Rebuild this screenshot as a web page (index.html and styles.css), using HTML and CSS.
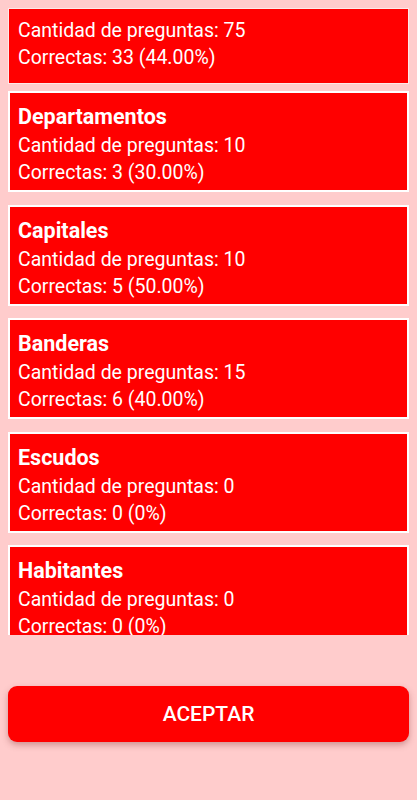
FILE: index.html
```html
<!DOCTYPE html>
<html>
    <head>
        <link rel="stylesheet" href="styles.css">
        <title>Resultados</title>
        <meta charset="utf-8">
        <meta name="viewport" content="width=device-width, initial-scale=1">
    </head>
    <body>
        <div class="screen">
            <div class="scroll">
                <div class="total">
                    <div class="line">Cantidad de preguntas: 75</div>
                    <div class="line">Correctas: 33 (44.00%)</div>
                </div>
                <div class="list">
                    <div class="card">
                        <div class="title">Departamentos</div>
                        <div class="line">Cantidad de preguntas: 10</div>
                        <div class="line">Correctas: 3 (30.00%)</div>
                    </div>
                    <div class="card">
                        <div class="title">Capitales</div>
                        <div class="line">Cantidad de preguntas: 10</div>
                        <div class="line">Correctas: 5 (50.00%)</div>
                    </div>
                    <div class="card">
                        <div class="title">Banderas</div>
                        <div class="line">Cantidad de preguntas: 15</div>
                        <div class="line">Correctas: 6 (40.00%)</div>
                    </div>
                    <div class="card">
                        <div class="title">Escudos</div>
                        <div class="line">Cantidad de preguntas: 0</div>
                        <div class="line">Correctas: 0 (0%)</div>
                    </div>
                    <div class="card">
                        <div class="title">Habitantes</div>
                        <div class="line">Cantidad de preguntas: 0</div>
                        <div class="line">Correctas: 0 (0%)</div>
                    </div>
                </div>
            </div>
            <button class="accept" type="button">ACEPTAR</button>
        </div>
    </body>
</html>
```

FILE: styles.css
```css
html, body {
    margin: 0;
    padding: 0;
}

body {
    background-color: #ffcccc;
    font-family: Roboto, "Noto Sans", Arial, sans-serif;
    color: white;
}

.screen {
    height: 800px;
    display: flex;
    flex-direction: column;
}

.scroll {
    height: 635px;
    overflow: hidden;
    padding: 8px 8px 0;
    box-sizing: border-box;
}

.total {
    background-color: #ff0000;
    border: 1px solid #ffe8e8;
    padding: 8px 9px 12px;
    margin-bottom: 7px;
}

.list {
    display: flex;
    flex-direction: column;
    gap: 12.5px;
}

.card {
    background-color: #ff0000;
    border: 2px solid white;
    padding: 9px 8px 4px;
}

.title {
    font-size: 21.5px;
    font-weight: bold;
    line-height: 30px;
}

.line {
    font-size: 19.5px;
    line-height: 27px;
}

.accept {
    margin: 51px 8px 0;
    height: 56px;
    border: none;
    border-radius: 9px;
    background-color: #ff0000;
    color: white;
    font-family: Roboto, "Noto Sans", Arial, sans-serif;
    font-size: 21px;
    font-weight: 500;
    box-shadow: 0 3px 6px rgba(120, 40, 40, 0.35);
    cursor: pointer;
}
```
